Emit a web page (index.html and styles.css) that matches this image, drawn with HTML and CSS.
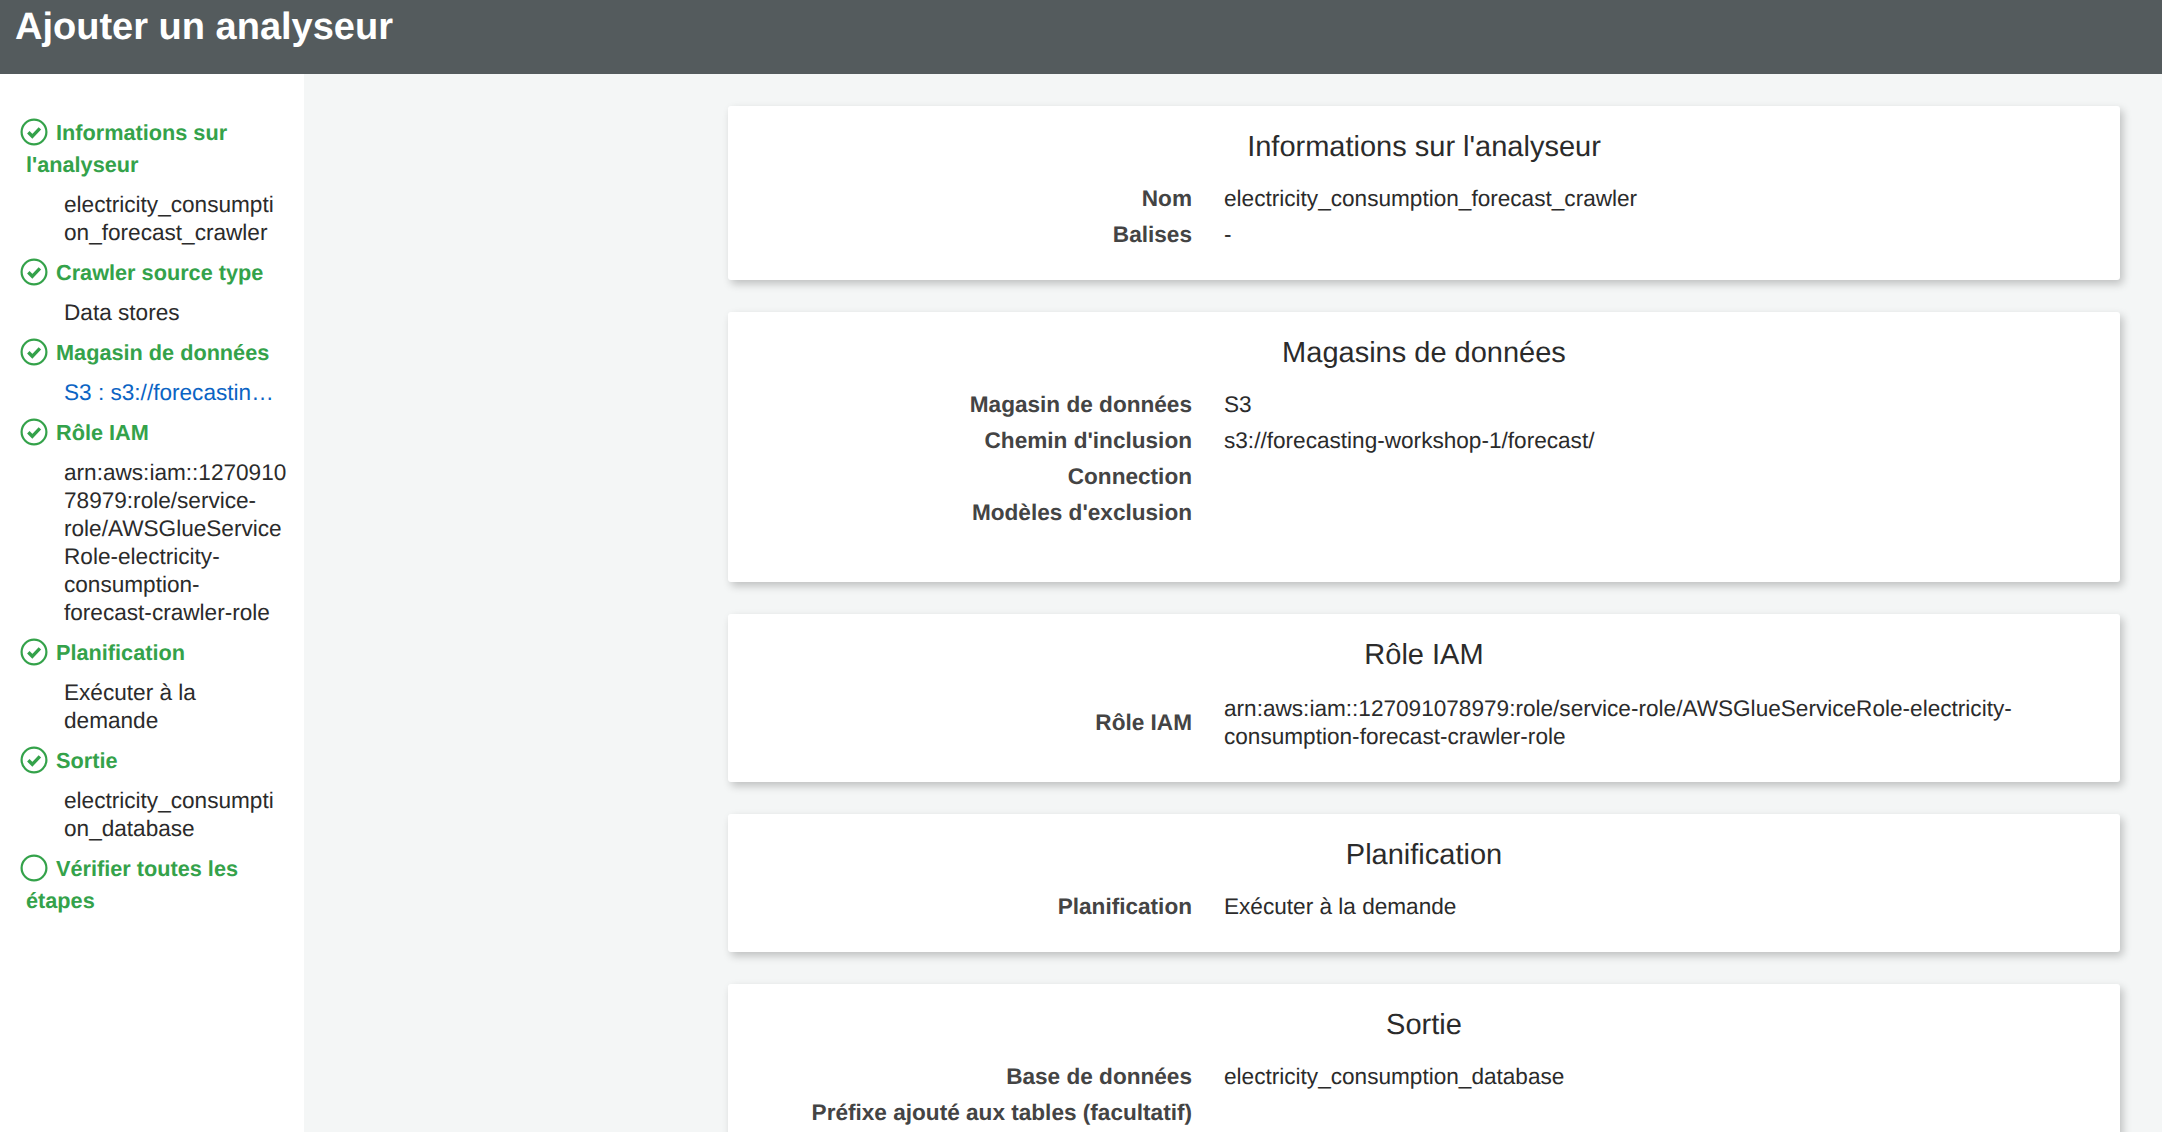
FILE: index.html
```html
<!DOCTYPE html>
<html lang="fr">
<head>
<meta charset="utf-8">
<title>Ajouter un analyseur</title>
<link rel="stylesheet" href="styles.css">
</head>
<body>
<svg class="defs" width="0" height="0" aria-hidden="true">
  <symbol id="done" viewBox="0 0 28 28">
    <circle cx="14" cy="14" r="12.4" fill="none" stroke="currentColor" stroke-width="2.2"/>
    <path d="M8.3 14.3l4 4 7.6-8" fill="none" stroke="currentColor" stroke-width="3.4"/>
  </symbol>
  <symbol id="todo" viewBox="0 0 28 28">
    <circle cx="14" cy="14" r="12.4" fill="none" stroke="currentColor" stroke-width="2.2"/>
  </symbol>
</svg>
<header class="topbar"><h1>Ajouter un analyseur</h1></header>
<div class="layout">
  <nav class="steps">
    <div class="step"><svg class="ico"><use href="#done"/></svg><span class="step-gap"></span>Informations sur l'analyseur</div>
    <div class="sub sub-long">electricity_consumpti<br>on_forecast_crawler</div>
    <div class="step"><svg class="ico"><use href="#done"/></svg><span class="step-gap"></span>Crawler source type</div>
    <div class="sub">Data stores</div>
    <div class="step"><svg class="ico"><use href="#done"/></svg><span class="step-gap"></span>Magasin de données</div>
    <div class="sub sub-link">S3 : s3://forecasting-workshop-1/forecast/</div>
    <div class="step"><svg class="ico"><use href="#done"/></svg><span class="step-gap"></span>Rôle IAM</div>
    <div class="sub sub-long">arn:aws:iam::1270910<br>78979:role/service-<br>role/AWSGlueService<br>Role-electricity-<br>consumption-<br>forecast-crawler-role</div>
    <div class="step"><svg class="ico"><use href="#done"/></svg><span class="step-gap"></span>Planification</div>
    <div class="sub">Exécuter à la demande</div>
    <div class="step"><svg class="ico"><use href="#done"/></svg><span class="step-gap"></span>Sortie</div>
    <div class="sub sub-long">electricity_consumpti<br>on_database</div>
    <div class="step"><svg class="ico"><use href="#todo"/></svg><span class="step-gap"></span>Vérifier toutes les étapes</div>
  </nav>
  <main class="review">
    <section class="card">
      <h2>Informations sur l'analyseur</h2>
      <dl>
        <div class="row"><dt>Nom</dt><dd>electricity_consumption_forecast_crawler</dd></div>
        <div class="row"><dt>Balises</dt><dd>-</dd></div>
      </dl>
    </section>
    <section class="card card-stores">
      <h2>Magasins de données</h2>
      <dl>
        <div class="row"><dt>Magasin de données</dt><dd>S3</dd></div>
        <div class="row"><dt>Chemin d'inclusion</dt><dd>s3://forecasting-workshop-1/forecast/</dd></div>
        <div class="row"><dt>Connection</dt><dd></dd></div>
        <div class="row"><dt>Modèles d'exclusion</dt><dd></dd></div>
      </dl>
    </section>
    <section class="card">
      <h2>Rôle IAM</h2>
      <dl>
        <div class="row row-center"><dt>Rôle IAM</dt><dd>arn:aws:iam::127091078979:role/service-role/AWSGlueServiceRole-electricity-consumption-forecast-crawler-role</dd></div>
      </dl>
    </section>
    <section class="card">
      <h2>Planification</h2>
      <dl>
        <div class="row"><dt>Planification</dt><dd>Exécuter à la demande</dd></div>
      </dl>
    </section>
    <section class="card">
      <h2>Sortie</h2>
      <dl>
        <div class="row"><dt>Base de données</dt><dd>electricity_consumption_database</dd></div>
        <div class="row"><dt>Préfixe ajouté aux tables (facultatif)</dt><dd></dd></div>
      </dl>
    </section>
  </main>
</div>
</body>
</html>
```
FILE: styles.css
```css
* { box-sizing: border-box; }
html, body { margin: 0; height: 100%; overflow: hidden; }
body {
  font-family: "Liberation Sans", Arial, sans-serif;
  font-size: 22.6px;
  line-height: 28px;
  color: #2b2b2b;
  background: #f4f6f6;
  text-rendering: geometricPrecision;
  display: flex;
  flex-direction: column;
}
.defs { position: absolute; }
.topbar {
  flex: none;
  height: 74px;
  background: #545b5d;
  padding: 5px 15px 0;
}
.topbar h1 {
  margin: 0;
  color: #fff;
  font-size: 38px;
  line-height: 44px;
  font-weight: 700;
}
.layout { flex: 1; display: flex; min-height: 0; }
.steps {
  flex: none;
  width: 304px;
  background: #fff;
  padding: 43px 16px 0 20px;
}
.step {
  color: #34a24a;
  font-weight: 700;
  font-size: 21.7px;
  line-height: 32px;
  margin-bottom: 10px;
  padding-left: 6px;
  text-indent: -6px;
}
.ico {
  width: 28px;
  height: 28px;
  vertical-align: -6px;
  text-indent: 0;
}
.step-gap { display: inline-block; width: 8px; }
.sub {
  padding-left: 44px;
  margin-bottom: 10px;
}
.sub-long { white-space: nowrap; }
.sub-link {
  color: #0b64c4;
  white-space: nowrap;
  overflow: hidden;
  text-overflow: ellipsis;
  margin-right: 8px;
}
.review {
  flex: 1;
  min-width: 0;
  padding: 32px 42px 0 424px;
  display: flex;
  flex-direction: column;
  gap: 32px;
}
.card {
  flex: none;
  background: #fff;
  border-radius: 3px;
  box-shadow: 3px 4px 8px rgba(0, 0, 0, 0.22);
  padding: 23px 0 28px;
}
.card-stores { padding-bottom: 52px; }
.card h2 {
  margin: 0 0 15px;
  text-align: center;
  font-size: 29px;
  line-height: 36px;
  font-weight: 400;
  color: #2b2b2b;
}
dl { margin: 0; }
.row { display: flex; align-items: flex-start; min-height: 36px; padding: 5px 0 3px; }
.row-center { align-items: center; padding: 7px 0 3px; }
dt {
  flex: none;
  width: 464px;
  text-align: right;
  font-weight: 700;
  color: #444;
}
dd {
  margin: 0 0 0 32px;
  flex: 1;
  padding-right: 100px;
}
```
